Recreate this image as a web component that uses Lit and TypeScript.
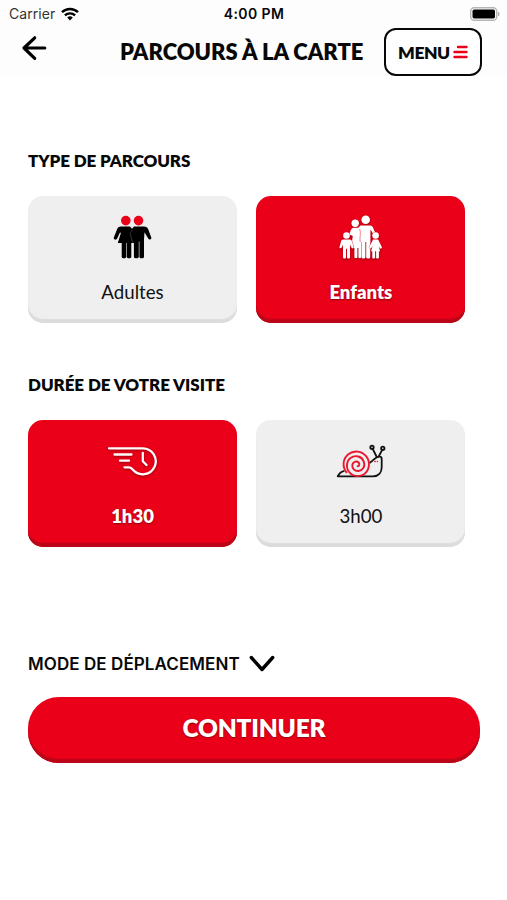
import { LitElement, html, css, svg, type TemplateResult } from "lit";
import { customElement, property, state } from "lit/decorators.js";
import { classMap } from "lit/directives/class-map.js";

const adultsIcon = html`<svg width="70" height="60" viewBox="-2.5 0 70 60">
  <g fill="#ea0019"><circle cx="25.3" cy="15.6" r="4.8" /><circle cx="38" cy="15.6" r="4.8" /></g>
  <path fill="#000" d="M20.8 21.6h8.7l2 2.1 2-2.1h10c2.2 0 3.4.9 4.2 2.7l3 8c.7 2.200-2.200 3-3 1.100L44 27.300l-.5 7.200v17.200c0 2-4.600 2-4.600 0V36.500h-.6v15.200c0 2-4.900 2-4.900 0V38.100h-2.600v13.600c0 2-4.500 2-4.500 0V38.100h-.6v13.600c0 2-4.500 2-4.500 0V38.100h-3.900l3-9.800-.7-1-2.900 6.300c-1.100 2-4 .9-3.300-1.300l3.300-8.200c.8-1.700 1.900-2.500 3.800-2.500z" />
  <path d="M31.700 25l-2.100 3.500 2.700 9.300" stroke="#555" stroke-width=".6" fill="none" />
</svg>`;

const child = (x: number, skirt: boolean) => svg`<g transform="translate(${x} 0)">
  <circle cy="30.500" r="3.300" />
  <path d=${skirt
    ? "M-2.500 34.500h5l3.700 7.500c.5 1.500-1.300 2.200-2.100.9l-1.100-2 1.500 5.400h-1.200v6.200c0 1.400-2.800 1.400-2.800 0v-6.200h-1v6.200c0 1.400-2.800 1.400-2.800 0v-6.200h-1.200l1.500-5.400-1.300 2c-.8 1.100-2.500.5-2-.9z"
    : "M-3.200 34.500h6.400c1.300 0 2 .8 2.300 1.900l1.500 5.600c.3 1.500-1.700 1.900-2.200.6l-1.300-3.100v12.800c0 1.700-3 1.700-3 0v-8.500h-1v8.500c0 1.700-3 1.700-3 0V39.500l-1.300 3.100c-.6 1.200-2.500.7-2.200-.7l1.500-5.500c.3-1.200 1-1.900 2.300-1.900z"} />
</g>`;

const familyIcon = html`<svg class="lifted" width="70" height="60" viewBox="1 0 70 60" fill="#fff">
  <circle cx="30.200" cy="18.300" r="3.700" /><circle cx="40.700" cy="14.800" r="4.300" />
  <path d="M35.500 20.500h9.500c1.800 0 2.600 1 3.200 2.500l1.800 4.300c.6 1.700-1.500 2.300-2.200.9l-2.300-3.700-.3 27.500c0 2-4 2-4 0V37h-.8v15c0 2-3.900 2-3.900 0V37h-.4v15c0 1.600-2.700 1.600-2.700 0v-9h-1v9c0 1.600-3 1.600-3 0v-9l-3.300-1 1.700-11-2.200-1-1.600-.800 2.200-4.700c.7-1.300 1.600-1.800 3-1.800h4.100z" />
  <path d="M34.800 24c1.500 5-.5 8 .4 13" stroke="#ea0019" stroke-width=".5" fill="none" />
  <g stroke="#ea0019" stroke-width=".7" paint-order="stroke">${child(21.500, false)}${child(50.600, true)}</g>
</svg>`;

const fastIcon = html`<svg class="lifted" width="70" height="60" viewBox="-2.5 -6 70 60" fill="none" stroke="#fff" stroke-linecap="round" stroke-linejoin="round" stroke-width="2.300">
  <path d="M8.500 13.300H42.300a13 13 0 1 1-9.900 21.500c-1.300-1.700-2-2.500-3.700-2.500H24M14 19.500H31M19.500 25.700h9M42.300 18v8.300l3.700 3.700" />
</svg>`;

const snailIcon = html`<svg width="70" height="60" viewBox="1 -6 70 60" fill="none" stroke-linecap="round" stroke-linejoin="round">
  <g stroke="#111" stroke-width="1.800">
    <path d="M21.500 41.300H12.700c1.500-2.700 3-4.500 6-5.200M21.500 41.300H48c5.500 0 8.700-3.700 8.700-9v-8.500c0-1.700-.8-2.200-2.200-2.200-4.500 0-5.500 3.700-9.500 6M51.500 21.500l-3.500-7M53.700 21.500l3.500-6.700" />
    <circle cx="47" cy="12.300" r="1.700" /><circle cx="57.800" cy="13.300" r="1.700" />
  </g>
  <g stroke="#ea1730" stroke-width="1.900">
    <path d="M21.500 37.300A12.700 12.700 0 1 1 39 39.300C35 42 28.500 41.800 25.500 38.500 20.500 34 21 26.500 25.500 23c5-3.700 11.500-1.500 13.300 3.700 1.700 5-1.200 9-5.300 9.300-4 .3-6.500-2.700-6.200-5.800.3-3.500 4.200-4.700 6.300-2.700 1.400 1.600.7 3.700-1 3.800" />
    <path d="M49.800 26.500h.5M52.300 26.500h.2" stroke-width="1.300" />
  </g>
</svg>`;

@customElement("choice-card")
export class ChoiceCard extends LitElement {
  @property() label = "";
  @property({ type: Boolean }) selected = false;
  @property({ attribute: false }) icon?: TemplateResult;

  static styles = css`
    :host { display: block; }
    .card {
      box-sizing: border-box; width: 100%; height: 127px; padding: 9px 0 0;
      display: flex; flex-direction: column; align-items: center;
      border: 0; border-radius: 15px; background: #efefef; color: #111;
      box-shadow: inset 0 -4px 1px #dcdcdc;
      font: 400 18.700px/24px Lato, sans-serif;
    }
    .card.selected {
      background: #ea0019; color: #fff; font-weight: 800; font-size: 18.500px;
      box-shadow: inset 0 -4px 1px #b90718;
      text-shadow: 0 1px 2px rgba(80, 0, 0, .6);
    }
    svg { display: block; flex: none; }
    .lifted { filter: drop-shadow(0 1px 1px rgba(90, 0, 0, .55)); }
    .label { margin-top: 15px; }
  `;

  render() {
    return html`<button class=${classMap({ card: true, selected: this.selected })}>
      ${this.icon}<span class="label">${this.label}</span>
    </button>`;
  }
}

@customElement("app-root")
export class AppRoot extends LitElement {
  @state() private audience = "Enfants";
  @state() private duration = "1h30";

  static styles = css`
    :host { display: block; height: 900px; overflow: hidden; background: #fff; color: #080808; font-family: Lato, sans-serif; }
    svg { display: block; flex: none; }
    .status {
      height: 28px; box-sizing: border-box; padding: 0 7px 0 9px;
      display: grid; grid-template-columns: 1fr auto 1fr; align-items: center;
      font: 400 14px/28px Inter, sans-serif; background: #fdfdfd;
    }
    .carrier { display: flex; align-items: center; gap: 6px; color: #333; letter-spacing: .05px; }
    .time { font-weight: 600; letter-spacing: .4px; margin-right: 1px; }
    .battery { justify-self: end; }
    .nav { height: 48px; display: flex; align-items: center; padding: 0 24.500px 0 21px; background: #fdfdfd; }
    .back { margin-top: -8px; }
    .title { margin: 0 0 0 73px; width: 264.400px; white-space: nowrap; font-size: 22px; line-height: 28px; font-weight: 800; letter-spacing: -.02px; }
    .menu {
      box-sizing: border-box; width: 98px; height: 48px; padding: 2px 1px 0 0; flex: none;
      display: flex; align-items: center; justify-content: center; gap: 3px;
      border: 2px solid #080808; border-radius: 12px; background: #fff; color: inherit;
      font: 800 17.500px/22px Lato, sans-serif; letter-spacing: -.5px;
    }
    .menu svg { margin-top: -2px; }
    .content { padding: 74px 27px 0 28px; }
    .heading { margin: 0; font-size: 17px; line-height: 22px; font-weight: 800; white-space: nowrap; letter-spacing: -.1px; }
    .heading.length { letter-spacing: -.06px; }
    .cards { display: grid; grid-template-columns: 209px 209px; gap: 19.400px; margin: 24px 0 51px; }
    .mode { display: flex; align-items: center; gap: 9px; margin-top: 106px; height: 22px; font: 600 17px/22px Inter, sans-serif; letter-spacing: .08px; }
    .go {
      box-sizing: border-box; width: 100%; height: 66px; margin-top: 22px; padding: 0 0 4px;
      border: 0; border-radius: 31px; background: #ea0019; color: #fff;
      box-shadow: inset 0 -4px 1px #b90718;
      font: 800 24.500px/30px Lato, sans-serif; letter-spacing: -.2px; text-shadow: 0 1px 2px rgba(80, 0, 0, .6);
    }
  `;

  private choice(label: string, icon: TemplateResult, current: string, pick: () => void) {
    return html`<choice-card .label=${label} .icon=${icon} .selected=${current === label} @click=${pick}></choice-card>`;
  }

  render() {
    return html`
      <div class="status">
        <span class="carrier"><span class="operator">Carrier</span>
          <svg width="18" height="14" viewBox="0 0 18 14" fill="none" stroke="#000" stroke-width="2.400">
            <path d="M1 5.200a11.500 11.500 0 0 1 16 0M3.900 8.400a7.400 7.400 0 0 1 10.200 0" />
            <path d="M6.200 10.500a4.200 4.200 0 0 1 5.600 0L9 13.600z" fill="#000" stroke="none" />
          </svg>
        </span>
        <span class="time">4:00 PM</span>
        <svg class="battery" width="30" height="14" viewBox="0 0 30 14">
          <rect x=".7" y=".7" width="26" height="12.600" rx="3.500" fill="#fff" stroke="#b5b5b5" stroke-width="1.400" />
          <rect x="2.500" y="2.500" width="22.500" height="9" rx="1.700" fill="#000" />
          <path d="M28 4.700c2 .6 2 4 0 4.600z" fill="#aaa" />
        </svg>
      </div>
      <header class="nav">
        <svg class="back" width="26" height="26" viewBox="0 0 26 26" fill="none" stroke="#000" stroke-width="3.200" stroke-linecap="round" stroke-linejoin="round">
          <path d="M13.700 2.800L3 13l10.700 10.300M3 13h20.800" />
        </svg>
        <h1 class="title">PARCOURS À LA CARTE</h1>
        <button class="menu">MENU
          <svg width="15" height="14" viewBox="0 0 15 14" stroke="#ea0019" stroke-width="2.400" stroke-linecap="round">
            <path d="M5 2h8.500M1.500 7h12M1.500 12h12" />
          </svg>
        </button>
      </header>
      <main class="content">
        <h2 class="heading kind">TYPE DE PARCOURS</h2>
        <div class="cards">
          ${this.choice("Adultes", adultsIcon, this.audience, () => (this.audience = "Adultes"))}
          ${this.choice("Enfants", familyIcon, this.audience, () => (this.audience = "Enfants"))}
        </div>
        <h2 class="heading length">DURÉE DE VOTRE VISITE</h2>
        <div class="cards">
          ${this.choice("1h30", fastIcon, this.duration, () => (this.duration = "1h30"))}
          ${this.choice("3h00", snailIcon, this.duration, () => (this.duration = "3h00"))}
        </div>
        <div class="mode"><span class="mode-label">MODE DE DÉPLACEMENT</span>
          <svg width="26" height="18" viewBox="0 0 26 18" fill="none" stroke="#000" stroke-width="3.400" stroke-linecap="round" stroke-linejoin="round"><path d="M2.300 2.500L13 14.500 23.700 2.500" /></svg>
        </div>
        <button class="go">CONTINUER</button>
      </main>
    `;
  }
}
